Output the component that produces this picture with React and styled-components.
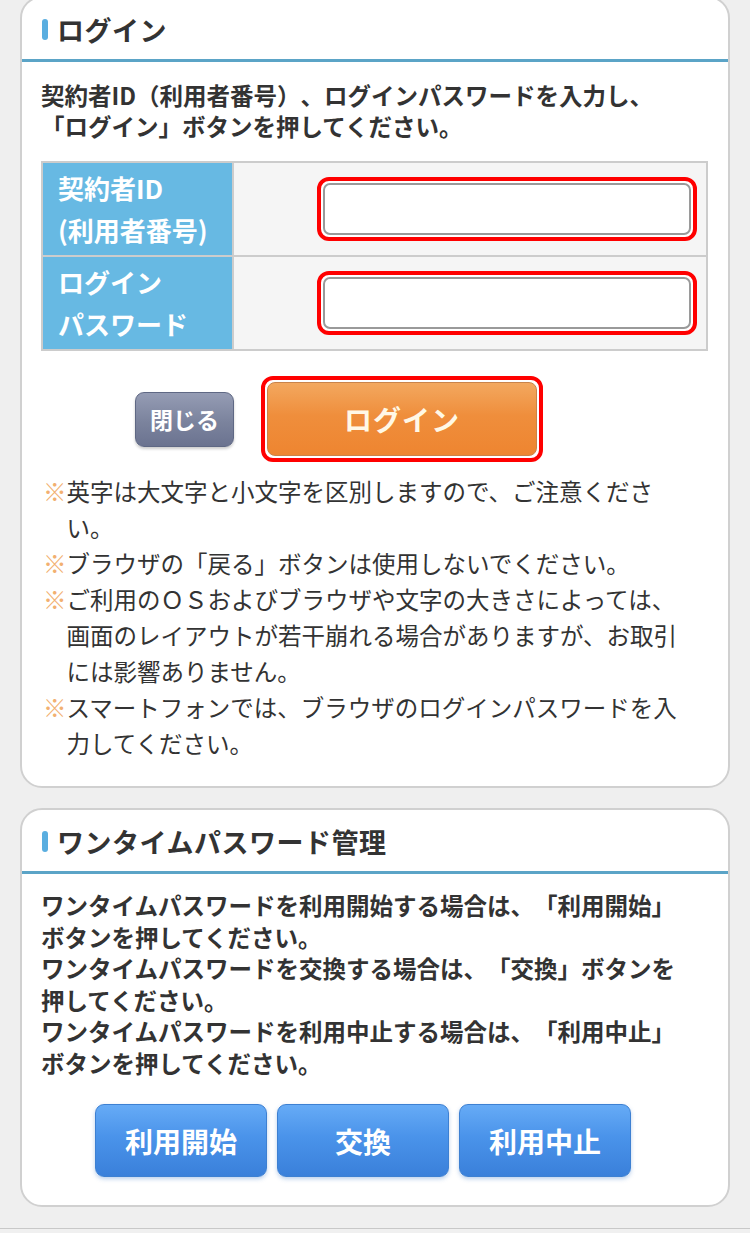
import React from 'react';
import styled, { createGlobalStyle } from 'styled-components';

const GlobalStyle = createGlobalStyle`
  html, body {
    margin: 0;
    padding: 0;
    background: #efefef;
  }
  body {
    font-family: "Noto Sans CJK JP", "Noto Sans", sans-serif;
    color: #333333;
    text-spacing-trim: space-all;
  }
`;

const Page = styled.div`
  width: 750px;
  min-height: 1233px;
  display: flex;
  flex-direction: column;
  overflow: hidden;
`;

const Card = styled.section`
  margin: ${p => p.$top || 0}px 20px 0;
  background: #ffffff;
  border: 2px solid #d0d0d0;
  border-radius: 22px;
  overflow: hidden;
`;

const Header = styled.div`
  display: flex;
  align-items: center;
  padding: 2px 20px 0;
  border-bottom: 3px solid #5ba4c7;
  box-sizing: border-box;
  height: 64px;
`;

const Accent = styled.span`
  display: inline-block;
  width: 6px;
  height: 21px;
  border-radius: 3px;
  background: #5aaee0;
  margin-right: 9px;
`;

const Title = styled.h2`
  margin: 0;
  font-size: 27px;
  font-weight: 700;
  color: #333333;
  letter-spacing: 0.5px;
`;

const Body = styled.div`
  padding: ${p => p.$pt}px 20px ${p => p.$pb}px 19px;
`;

const Lead = styled.p`
  margin: 0;
  font-size: 23.5px;
  line-height: 31px;
  font-weight: 700;
  color: #333333;
  white-space: nowrap;
`;

const FormTable = styled.div`
  margin-top: 19px;
  display: grid;
  grid-template-columns: 189px 1fr;
  border: 2px solid #cccccc;
  background: #cccccc;
  gap: 2px;
`;

const LabelCell = styled.div`
  background: #67b9e3;
  color: #ffffff;
  font-size: 26px;
  font-weight: 700;
  line-height: 42px;
  padding: 4px 15px;
  height: 92px;
  box-sizing: border-box;
`;

const InputCell = styled.div`
  background: #f5f5f5;
  display: flex;
  align-items: center;
  justify-content: flex-end;
  padding-right: 9px;
`;

const Highlight = styled.div`
  border: 4px solid #ff0000;
  border-radius: 12px;
  padding: 2px;
  background: #ffffff;
`;

const TextInput = styled.input`
  display: block;
  width: 368px;
  height: 52px;
  box-sizing: border-box;
  border: 2px solid #9a9a9a;
  border-radius: 7px;
  background: #ffffff;
  outline: none;
`;

const ButtonRow = styled.div`
  display: flex;
  align-items: center;
  gap: ${p => p.$gap}px;
  padding-left: ${p => p.$indent}px;
  margin-top: ${p => p.$mt}px;
`;

const CloseButton = styled.button`
  width: 99px;
  height: 55px;
  border: 1px solid #5f6884;
  border-radius: 9px;
  background: linear-gradient(#959cb4, #7b839d 55%, #6b7390);
  box-shadow: 0 2px 3px rgba(0, 0, 0, 0.2);
  color: #ffffff;
  font-family: inherit;
  font-size: 23px;
  font-weight: 700;
  padding: 0;
`;

const LoginButton = styled.button`
  display: block;
  width: 270px;
  height: 74px;
  border: 1px solid #c9834a;
  border-radius: 8px;
  background: linear-gradient(#f3a85f, #ef8e3c 45%, #ee8530);
  color: #fff8e6;
  font-family: inherit;
  font-size: 28px;
  font-weight: 700;
  letter-spacing: 1px;
`;

const Notes = styled.ul`
  list-style: none;
  margin: 11px 0 0;
  padding: 0 0 0 2px;
  font-size: 23.5px;
  line-height: 36px;
  color: #333333;
`;

const Note = styled.li`
  display: flex;
`;

const Mark = styled.span`
  color: #f2b070;
  flex: none;
`;

const NoteText = styled.span`
  white-space: nowrap;
`;

const Plain = styled.p`
  margin: 0;
  font-size: 23.5px;
  line-height: 31.5px;
  font-weight: 700;
  color: #333333;
  white-space: nowrap;
`;

const BlueButton = styled.button`
  width: 172px;
  height: 73px;
  border: 1px solid #3d80d2;
  border-radius: 9px;
  background: linear-gradient(#66abf6, #4a93ea 45%, #3a80da);
  box-shadow: 0 2px 4px rgba(60, 120, 200, 0.35);
  color: #ffffff;
  font-family: inherit;
  font-size: 28px;
  font-weight: 700;
`;

const Footer = styled.div`
  margin-top: 21px;
  flex: 1;
  border-top: 1px solid #c8c8c8;
  background: #f0f0f0;
`;

const notes = [
  ['英字は大文字と小文字を区別しますので、ご注意くださ', 'い。'],
  ['ブラウザの「戻る」ボタンは使用しないでください。'],
  [
    'ご利用のＯＳおよびブラウザや文字の大きさによっては、',
    '画面のレイアウトが若干崩れる場合がありますが、お取引',
    'には影響ありません。',
  ],
  ['スマートフォンでは、ブラウザのログインパスワードを入', '力してください。'],
];

const otpLines = [
  'ワンタイムパスワードを利用開始する場合は、「利用開始」',
  'ボタンを押してください。',
  'ワンタイムパスワードを交換する場合は、「交換」ボタンを',
  '押してください。',
  'ワンタイムパスワードを利用中止する場合は、「利用中止」',
  'ボタンを押してください。',
];

const Lines = ({ lines }) =>
  lines.map((line, i) => (
    <React.Fragment key={i}>
      {i > 0 && <br />}
      {line}
    </React.Fragment>
  ));

const CardTitle = ({ children }) => (
  <Header>
    <Accent />
    <Title>{children}</Title>
  </Header>
);

export default function App() {
  return (
    <Page>
      <GlobalStyle />
      <Card $top={-4}>
        <CardTitle>ログイン</CardTitle>
        <Body $pt={18} $pb={25}>
          <Lead>
            <Lines
              lines={[
                '契約者ID（利用者番号）、ログインパスワードを入力し、',
                '「ログイン」ボタンを押してください。',
              ]}
            />
          </Lead>
          <FormTable>
            <LabelCell>
              <Lines lines={['契約者ID', '(利用者番号)']} />
            </LabelCell>
            <InputCell>
              <Highlight>
                <TextInput type="text" />
              </Highlight>
            </InputCell>
            <LabelCell>
              <Lines lines={['ログイン', 'パスワード']} />
            </LabelCell>
            <InputCell>
              <Highlight>
                <TextInput type="password" />
              </Highlight>
            </InputCell>
          </FormTable>
          <ButtonRow $gap={27} $indent={94} $mt={25}>
            <CloseButton>閉じる</CloseButton>
            <Highlight>
              <LoginButton>ログイン</LoginButton>
            </Highlight>
          </ButtonRow>
          <Notes>
            {notes.map((lines, i) => (
              <Note key={i}>
                <Mark>※</Mark>
                <NoteText>
                  <Lines lines={lines} />
                </NoteText>
              </Note>
            ))}
          </Notes>
        </Body>
      </Card>

      <Card $top={20}>
        <CardTitle>ワンタイムパスワード管理</CardTitle>
        <Body $pt={16} $pb={28}>
          <Plain>
            <Lines lines={otpLines} />
          </Plain>
          <ButtonRow $gap={10} $indent={54} $mt={25}>
            <BlueButton>利用開始</BlueButton>
            <BlueButton>交換</BlueButton>
            <BlueButton>利用中止</BlueButton>
          </ButtonRow>
        </Body>
      </Card>
      <Footer />
    </Page>
  );
}
